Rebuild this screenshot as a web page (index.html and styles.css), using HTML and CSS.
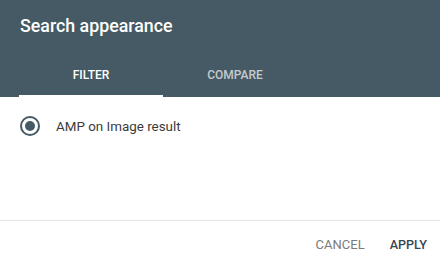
FILE: index.html
```html
<!DOCTYPE html>
<html lang="en">
<head>
  <meta charset="UTF-8">
  <title>Search appearance</title>
  <link rel="stylesheet" href="styles.css">
</head>
<body>
  <div class="dialog">
    <div class="head">
      <h2 class="title">Search appearance</h2>
      <div class="tabs">
        <div class="tab active">FILTER</div>
        <div class="tab">COMPARE</div>
      </div>
    </div>
    <div class="body">
      <label class="option">
        <span class="radio"><span class="dot"></span></span>
        <span class="label">AMP on Image result</span>
      </label>
    </div>
    <div class="foot">
      <a href="javascript:;" class="btn cancel">CANCEL</a>
      <a href="javascript:;" class="btn">APPLY</a>
    </div>
  </div>
</body>
</html>
```

FILE: styles.css
```css
* {
  margin: 0;
  padding: 0;
  box-sizing: border-box;
}
body {
  background: #fff;
  font-family: Roboto, "Liberation Sans", sans-serif;
}
.dialog {
  width: 440px;
  height: 266px;
  display: flex;
  flex-direction: column;
}
/* header */
.head {
  background: #455a64;
  height: 97px;
  padding-top: 14px;
  display: flex;
  flex-direction: column;
}
.title {
  font-size: 17.8px;
  font-weight: 500;
  color: #fff;
  line-height: 24px;
  padding-left: 20px;
}
.tabs {
  margin-top: auto;
  padding-left: 19px;
  display: flex;
}
.tab {
  width: 144px;
  height: 46px;
  padding-top: 4px;
  font-size: 12px;
  font-weight: 500;
  color: rgba(255,255,255,0.7);
  text-align: center;
  line-height: 40px;
  border-bottom: 2px solid transparent;
}
.tab.active {
  color: #fff;
  border-bottom-color: #fff;
}
/* body */
.body {
  flex: 1;
  padding: 19px 0 0 20px;
}
.option {
  display: flex;
  align-items: center;
  height: 20px;
}
.radio {
  width: 20px;
  height: 20px;
  border: 2px solid #455a64;
  border-radius: 50%;
  display: flex;
  align-items: center;
  justify-content: center;
}
.dot {
  width: 10px;
  height: 10px;
  border-radius: 50%;
  background: #455a64;
}
.label {
  margin-left: 16px;
  font-size: 13.4px;
  color: #3c3c3c;
}
/* footer */
.foot {
  height: 46px;
  border-top: 1px solid #e6e6e6;
  display: flex;
  justify-content: flex-end;
  align-items: center;
  padding-right: 13px;
  padding-top: 2px;
}
.btn {
  font-size: 12.6px;
  font-weight: 500;
  color: #37474f;
  text-decoration: none;
  margin-left: 25px;
}
.btn.cancel {
  font-size: 13px;
  font-weight: 400;
  color: #7a7a7a;
}
```
